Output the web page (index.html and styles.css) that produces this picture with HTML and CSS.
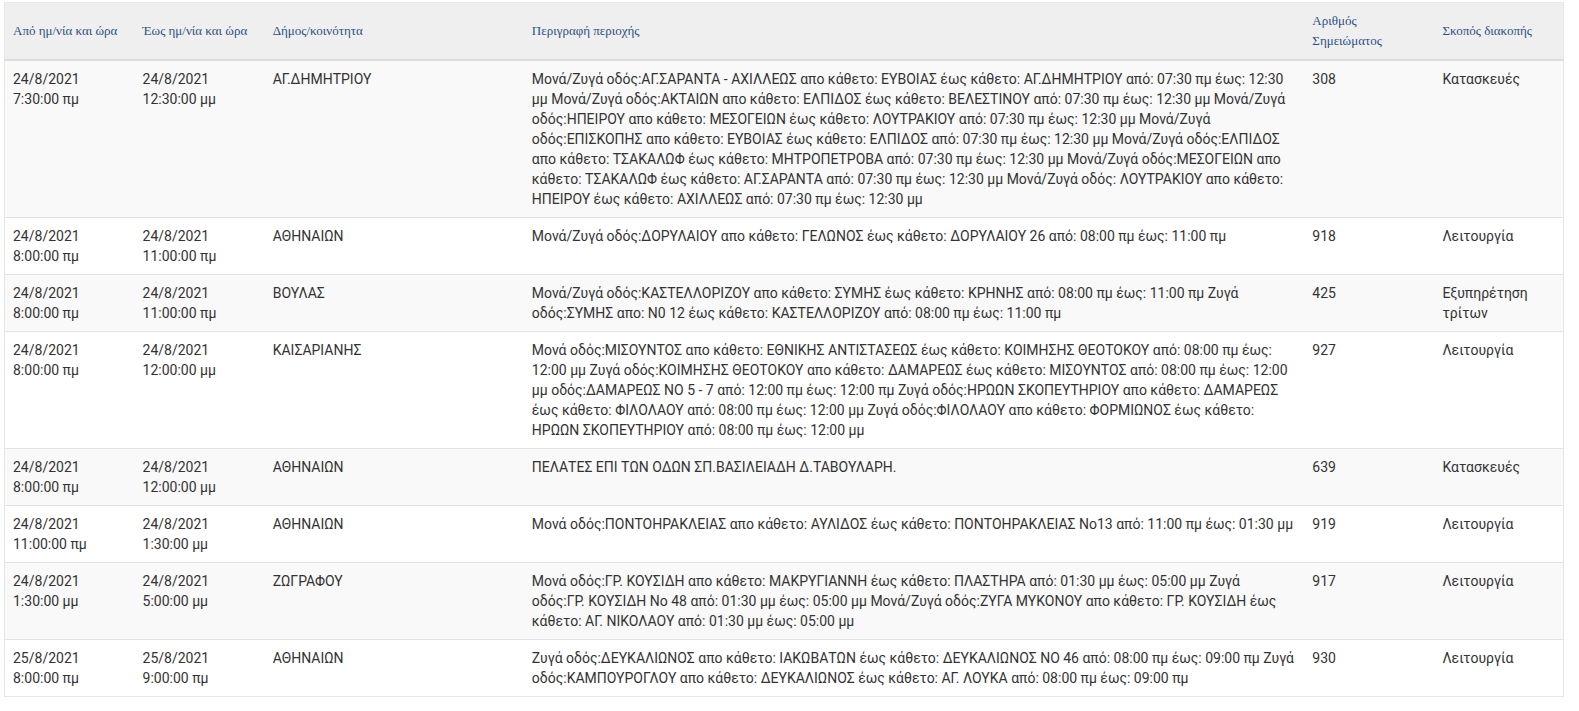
FILE: index.html
```html
<!DOCTYPE html>
<html lang="el">
<head>
<meta charset="utf-8">
<title>Διακοπές</title>
<link rel="stylesheet" href="styles.css">
</head>
<body>
<div class="wrap">
<table class="outages">
<colgroup>
<col class="c-from"><col class="c-to"><col class="c-mun"><col class="c-desc"><col class="c-num"><col class="c-purpose">
</colgroup>
<thead>
<tr>
<th>Από ημ/νία και ώρα</th>
<th>Έως ημ/νία και ώρα</th>
<th>Δήμος/κοινότητα</th>
<th>Περιγραφή περιοχής</th>
<th>Αριθμός Σημειώματος</th>
<th>Σκοπός διακοπής</th>
</tr>
</thead>
<tbody>
<tr>
<td>24/8/2021 7:30:00 πμ</td>
<td>24/8/2021 12:30:00 μμ</td>
<td>ΑΓ.ΔΗΜΗΤΡΙΟΥ</td>
<td>Μονά/Ζυγά οδός:ΑΓ.ΣΑΡΑΝΤΑ - ΑΧΙΛΛΕΩΣ απο κάθετο: ΕΥΒΟΙΑΣ έως κάθετο: ΑΓ.ΔΗΜΗΤΡΙΟΥ από: 07:30 πμ έως: 12:30 μμ Μονά/Ζυγά οδός:ΑΚΤΑΙΩΝ απο κάθετο: ΕΛΠΙΔΟΣ έως κάθετο: ΒΕΛΕΣΤΙΝΟΥ από: 07:30 πμ έως: 12:30 μμ Μονά/Ζυγά οδός:ΗΠΕΙΡΟΥ απο κάθετο: ΜΕΣΟΓΕΙΩΝ έως κάθετο: ΛΟΥΤΡΑΚΙΟΥ από: 07:30 πμ έως: 12:30 μμ Μονά/Ζυγά οδός:ΕΠΙΣΚΟΠΗΣ απο κάθετο: ΕΥΒΟΙΑΣ έως κάθετο: ΕΛΠΙΔΟΣ από: 07:30 πμ έως: 12:30 μμ Μονά/Ζυγά οδός:ΕΛΠΙΔΟΣ απο κάθετο: ΤΣΑΚΑΛΩΦ έως κάθετο: ΜΗΤΡΟΠΕΤΡΟΒΑ από: 07:30 πμ έως: 12:30 μμ Μονά/Ζυγά οδός:ΜΕΣΟΓΕΙΩΝ απο κάθετο: ΤΣΑΚΑΛΩΦ έως κάθετο: ΑΓ.ΣΑΡΑΝΤΑ από: 07:30 πμ έως: 12:30 μμ Μονά/Ζυγά οδός: ΛΟΥΤΡΑΚΙΟΥ απο κάθετο: ΗΠΕΙΡΟΥ έως κάθετο: ΑΧΙΛΛΕΩΣ από: 07:30 πμ έως: 12:30 μμ</td>
<td>308</td>
<td>Κατασκευές</td>
</tr>
<tr>
<td>24/8/2021 8:00:00 πμ</td>
<td>24/8/2021 11:00:00 πμ</td>
<td>ΑΘΗΝΑΙΩΝ</td>
<td>Μονά/Ζυγά οδός:ΔΟΡΥΛΑΙΟΥ απο κάθετο: ΓΕΛΩΝΟΣ έως κάθετο: ΔΟΡΥΛΑΙΟΥ 26 από: 08:00 πμ έως: 11:00 πμ</td>
<td>918</td>
<td>Λειτουργία</td>
</tr>
<tr>
<td>24/8/2021 8:00:00 πμ</td>
<td>24/8/2021 11:00:00 πμ</td>
<td>ΒΟΥΛΑΣ</td>
<td>Μονά/Ζυγά οδός:ΚΑΣΤΕΛΛΟΡΙΖΟΥ απο κάθετο: ΣΥΜΗΣ έως κάθετο: ΚΡΗΝΗΣ από: 08:00 πμ έως: 11:00 πμ Ζυγά οδός:ΣΥΜΗΣ απο: Ν0 12 έως κάθετο: ΚΑΣΤΕΛΛΟΡΙΖΟΥ από: 08:00 πμ έως: 11:00 πμ</td>
<td>425</td>
<td>Εξυπηρέτηση τρίτων</td>
</tr>
<tr>
<td>24/8/2021 8:00:00 πμ</td>
<td>24/8/2021 12:00:00 μμ</td>
<td>ΚΑΙΣΑΡΙΑΝΗΣ</td>
<td>Μονά οδός:ΜΙΣΟΥΝΤΟΣ απο κάθετο: ΕΘΝΙΚΗΣ ΑΝΤΙΣΤΑΣΕΩΣ έως κάθετο: ΚΟΙΜΗΣΗΣ ΘΕΟΤΟΚΟΥ από: 08:00 πμ έως: 12:00 μμ Ζυγά οδός:ΚΟΙΜΗΣΗΣ ΘΕΟΤΟΚΟΥ απο κάθετο: ΔΑΜΑΡΕΩΣ έως κάθετο: ΜΙΣΟΥΝΤΟΣ από: 08:00 πμ έως: 12:00 μμ οδός:ΔΑΜΑΡΕΩΣ ΝΟ 5 - 7 από: 12:00 πμ έως: 12:00 πμ Ζυγά οδός:ΗΡΩΩΝ ΣΚΟΠΕΥΤΗΡΙΟΥ απο κάθετο: ΔΑΜΑΡΕΩΣ έως κάθετο: ΦΙΛΟΛΑΟΥ από: 08:00 πμ έως: 12:00 μμ Ζυγά οδός:ΦΙΛΟΛΑΟΥ απο κάθετο: ΦΟΡΜΙΩΝΟΣ έως κάθετο: ΗΡΩΩΝ ΣΚΟΠΕΥΤΗΡΙΟΥ από: 08:00 πμ έως: 12:00 μμ</td>
<td>927</td>
<td>Λειτουργία</td>
</tr>
<tr>
<td>24/8/2021 8:00:00 πμ</td>
<td>24/8/2021 12:00:00 μμ</td>
<td>ΑΘΗΝΑΙΩΝ</td>
<td>ΠΕΛΑΤΕΣ ΕΠΙ ΤΩΝ ΟΔΩΝ ΣΠ.ΒΑΣΙΛΕΙΑΔΗ Δ.ΤΑΒΟΥΛΑΡΗ.</td>
<td>639</td>
<td>Κατασκευές</td>
</tr>
<tr>
<td>24/8/2021 11:00:00 πμ</td>
<td>24/8/2021 1:30:00 μμ</td>
<td>ΑΘΗΝΑΙΩΝ</td>
<td>Μονά οδός:ΠΟΝΤΟΗΡΑΚΛΕΙΑΣ απο κάθετο: ΑΥΛΙΔΟΣ έως κάθετο: ΠΟΝΤΟΗΡΑΚΛΕΙΑΣ Νο13 από: 11:00 πμ έως: 01:30 μμ</td>
<td>919</td>
<td>Λειτουργία</td>
</tr>
<tr>
<td>24/8/2021 1:30:00 μμ</td>
<td>24/8/2021 5:00:00 μμ</td>
<td>ΖΩΓΡΑΦΟΥ</td>
<td>Μονά οδός:ΓΡ.&nbsp;ΚΟΥΣΙΔΗ απο κάθετο: ΜΑΚΡΥΓΙΑΝΝΗ έως κάθετο: ΠΛΑΣΤΗΡΑ από: 01:30 μμ έως: 05:00 μμ Ζυγά οδός:ΓΡ.&nbsp;ΚΟΥΣΙΔΗ Νο 48 από: 01:30 μμ έως: 05:00 μμ Μονά/Ζυγά οδός:ΖΥΓΑ ΜΥΚΟΝΟΥ απο κάθετο: ΓΡ.&nbsp;ΚΟΥΣΙΔΗ έως κάθετο: ΑΓ.&nbsp;ΝΙΚΟΛΑΟΥ από: 01:30 μμ έως: 05:00 μμ</td>
<td>917</td>
<td>Λειτουργία</td>
</tr>
<tr>
<td>25/8/2021 8:00:00 πμ</td>
<td>25/8/2021 9:00:00 πμ</td>
<td>ΑΘΗΝΑΙΩΝ</td>
<td>Ζυγά οδός:ΔΕΥΚΑΛΙΩΝΟΣ απο κάθετο: ΙΑΚΩΒΑΤΩΝ έως κάθετο: ΔΕΥΚΑΛΙΩΝΟΣ ΝΟ 46 από: 08:00 πμ έως: 09:00 πμ Ζυγά οδός:ΚΑΜΠΟΥΡΟΓΛΟΥ απο κάθετο: ΔΕΥΚΑΛΙΩΝΟΣ έως κάθετο: ΑΓ. ΛΟΥΚΑ από: 08:00 πμ έως: 09:00 πμ</td>
<td>930</td>
<td>Λειτουργία</td>
</tr>
</tbody>
</table>
</div>
</body>
</html>
```
FILE: styles.css
```css
html, body {
  margin: 0;
  padding: 0;
  background: #ffffff;
}

.wrap {
  padding: 2px 0 0 4px;
}

.outages {
  width: 1560px;
  table-layout: fixed;
  border-collapse: collapse;
  border: 1px solid #e6e6e6;
  font-family: Roboto, "Noto Sans", sans-serif;
  font-size: 14px;
  line-height: 20px;
  color: #333333;
}

.c-from { width: 130px; }
.c-to { width: 130px; }
.c-mun { width: 259px; }
.c-desc { width: 780px; }
.c-num { width: 130px; }
.c-purpose { width: 129px; }

.outages th {
  background: #efefef;
  font-family: "Liberation Serif", "DejaVu Serif", serif;
  font-weight: normal;
  font-size: 13px;
  line-height: 20px;
  color: #2b5186;
  text-align: left;
  vertical-align: middle;
  padding: 8px;
  border-bottom: 2px solid #dddddd;
}

.outages td {
  padding: 8px;
  vertical-align: top;
  text-align: left;
  border-top: 1px solid #e4e4e4;
}

.outages tbody tr:nth-child(odd) td {
  background: #f9f9f9;
}

.outages tbody tr:nth-child(even) td {
  background: #ffffff;
}
```
